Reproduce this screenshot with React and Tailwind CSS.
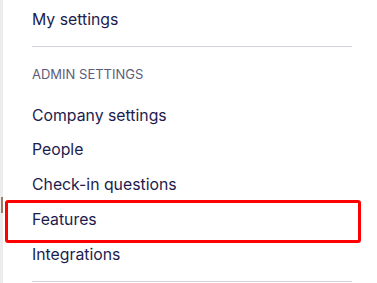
export default function App() {
  const items = ["Company settings", "People", "Check-in questions", "Features", "Integrations"];
  return (
    <div className="relative flex h-[283px] w-[377px] overflow-hidden bg-white" style={{ fontFamily: "Inter, 'Noto Sans', sans-serif" }}>
      <div className="relative w-[3px] shrink-0 bg-[#ececee]">
        <div className="absolute left-[1px] top-[197px] h-[16px] w-[2px] bg-[#a07a5e]" />
      </div>
      <div className="flex flex-1 flex-col pl-[29px] pr-[25px]">
        <div className="flex h-[39px] items-center text-[15.8px] text-[#1c1c4e]">My settings</div>
        <div className="mt-[7px] h-px bg-[#d3d3dd]" />
        <div className="flex h-[16px] mt-[20px] items-center text-[13px] text-[#5d5d7c]">ADMIN SETTINGS</div>
        <div className="mt-[15px] flex flex-col">
          {items.map((t) => (
            <div key={t} className="flex h-[34.75px] items-center text-[15.8px] text-[#1c1c4e]">{t}</div>
          ))}
        </div>
        <div className="mt-[9px] h-px bg-[#d3d3dd]" />
      </div>
      <div className="pointer-events-none absolute left-[5px] top-[200px] h-[43px] w-[356px] rounded-[3px] border-[3px] border-[#ff0000]" />
    </div>
  );
}
